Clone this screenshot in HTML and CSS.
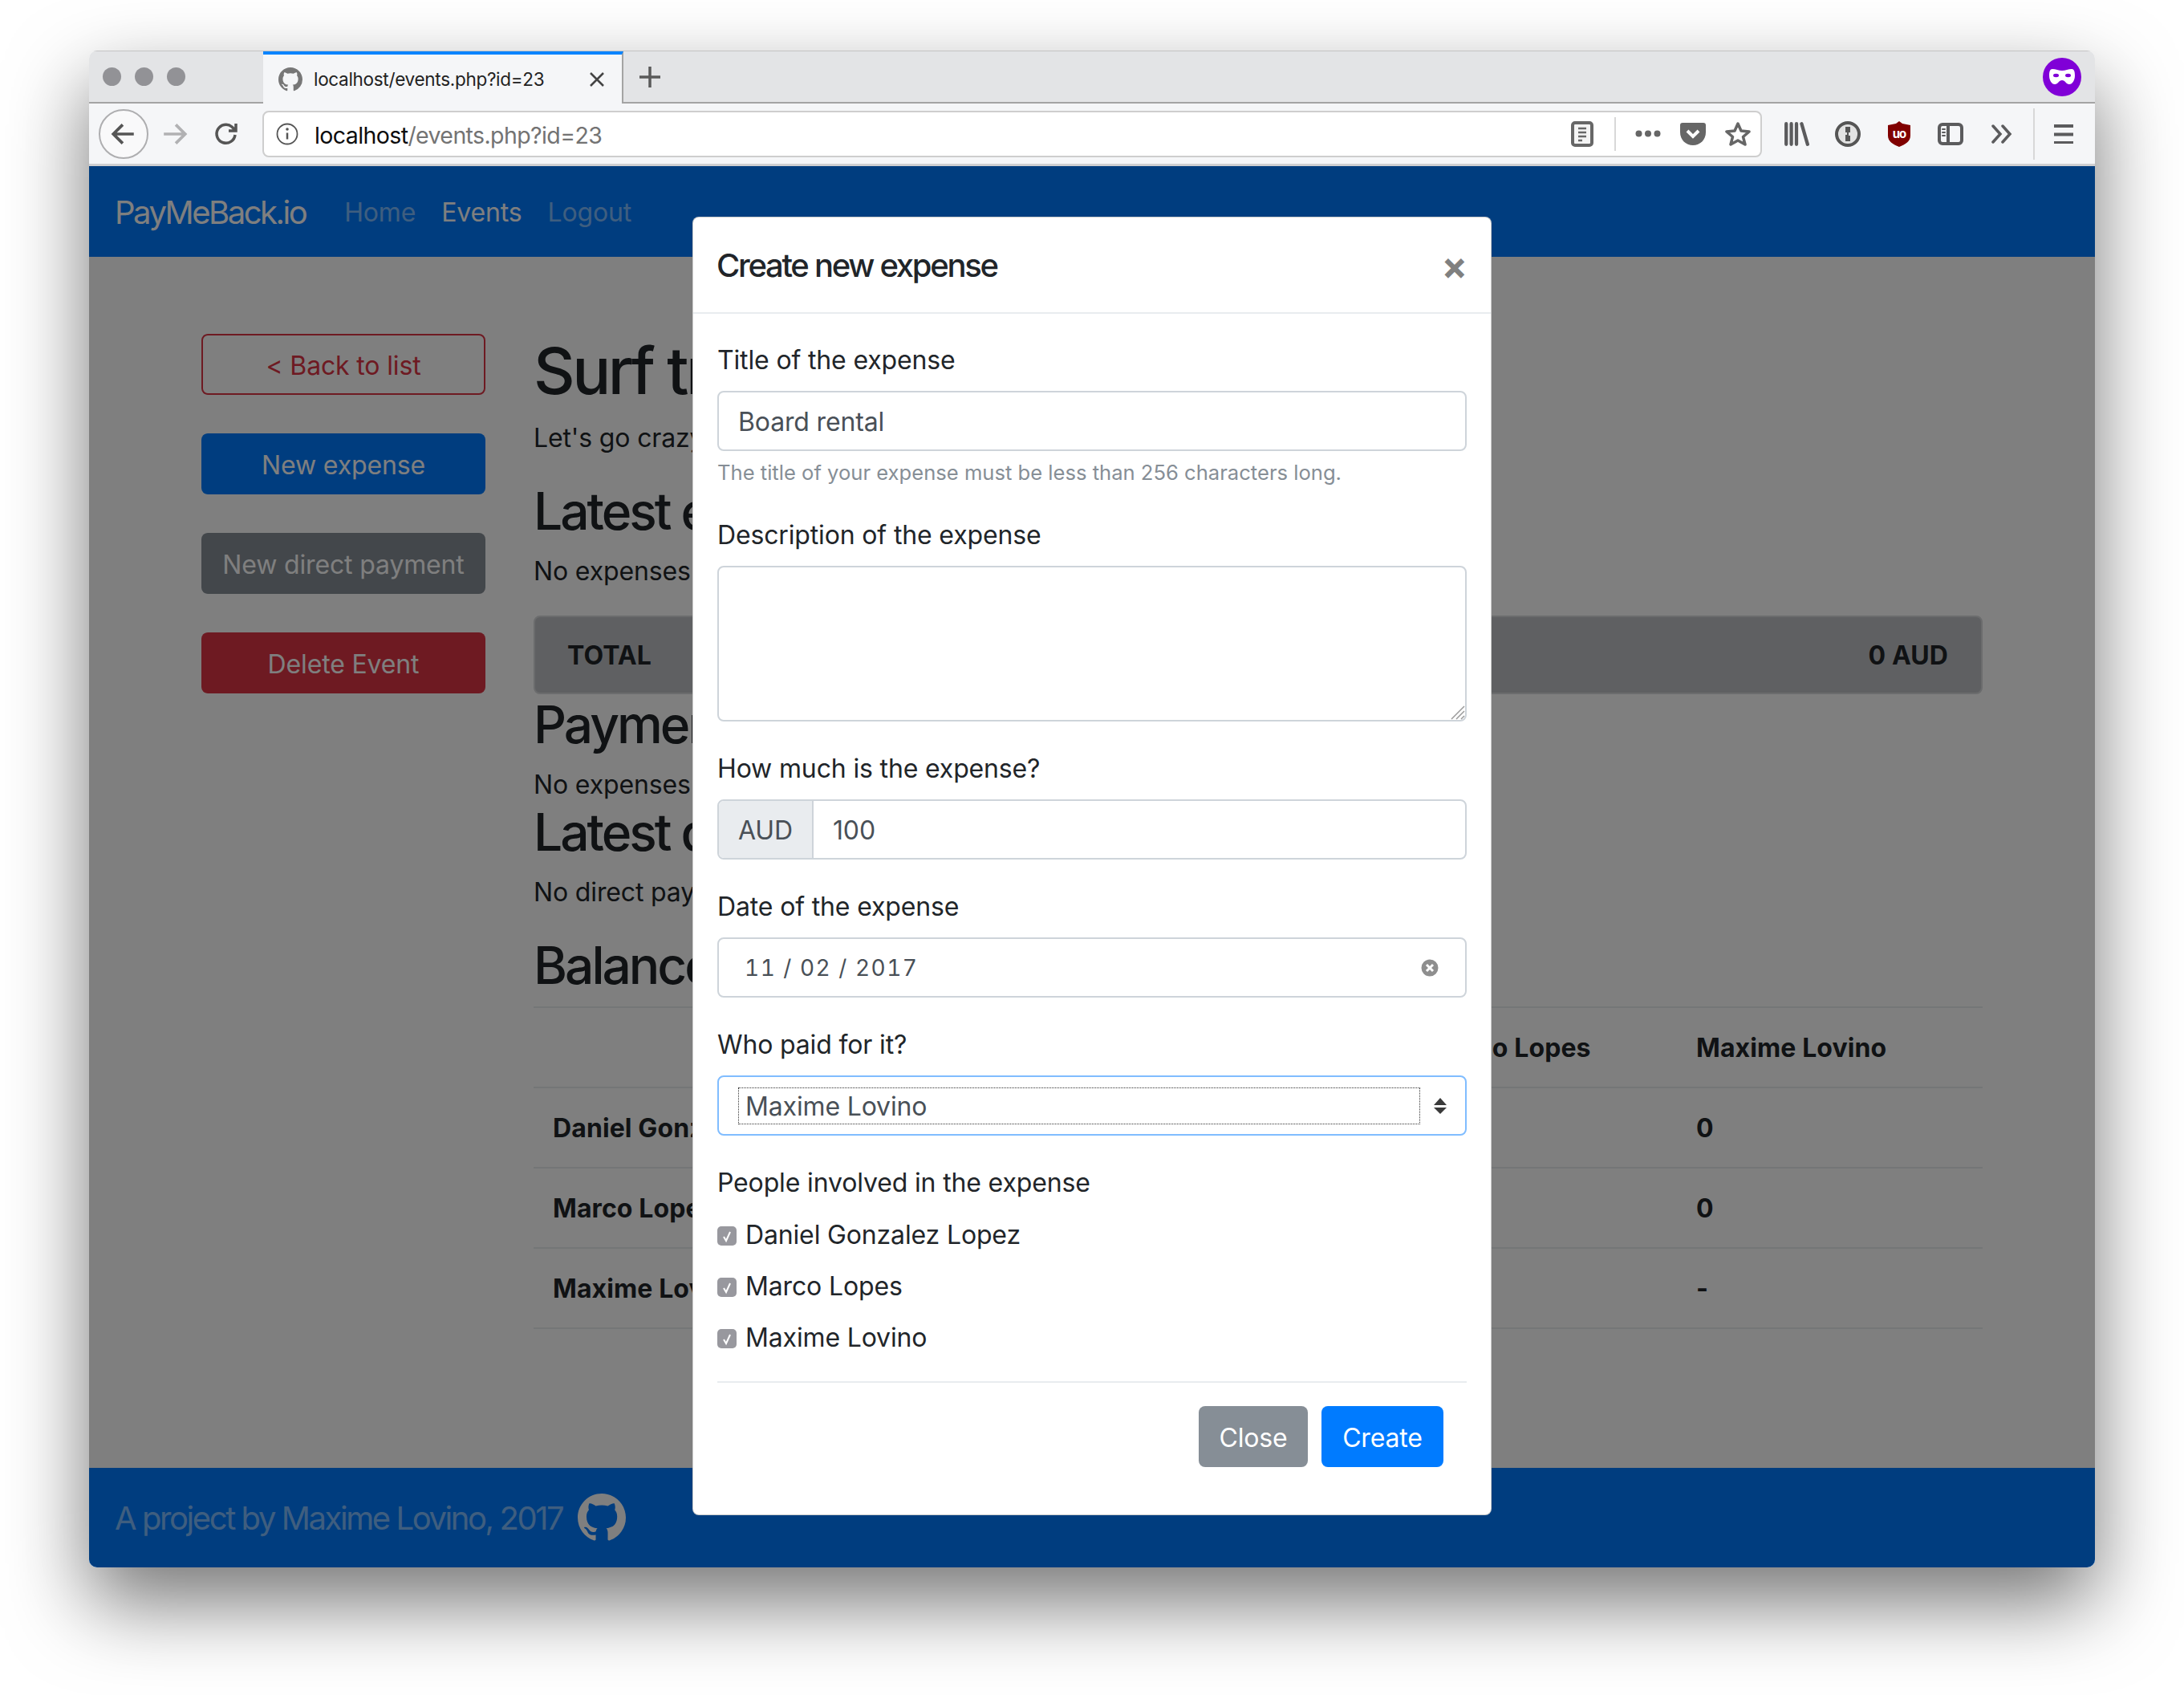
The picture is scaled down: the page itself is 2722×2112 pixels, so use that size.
FILE: index.html
```html
<!DOCTYPE html>
<html lang="en">
<head>
    <meta charset="UTF-8">
    <title>PayMeBack.io</title>
    <link rel="stylesheet" href="styles.css">
</head>
<body>
    <div class="window">
        <div class="tabbar">
            <div class="lights"><span></span><span></span><span></span></div>
            <div class="tab">
                <svg class="favicon" viewBox="0 0 16 16"><path d="M8 0C3.58 0 0 3.58 0 8c0 3.54 2.29 6.53 5.47 7.59.4.07.55-.17.55-.38 0-.19-.01-.82-.01-1.49-2.01.37-2.53-.49-2.69-.94-.09-.23-.48-.94-.82-1.13-.28-.15-.68-.52-.01-.53.63-.01 1.08.58 1.23.82.72 1.21 1.87.87 2.33.66.07-.52.28-.87.51-1.07-1.78-.2-3.64-.89-3.64-3.95 0-.87.31-1.59.82-2.15-.08-.2-.36-1.02.08-2.12 0 0 .67-.21 2.2.82.64-.18 1.32-.27 2-.27.68 0 1.36.09 2 .27 1.53-1.04 2.2-.82 2.2-.82.44 1.1.16 1.92.08 2.12.51.56.82 1.27.82 2.15 0 3.07-1.87 3.75-3.65 3.95.29.25.54.73.54 1.48 0 1.07-.01 1.93-.01 2.2 0 .21.15.46.55.38A8.013 8.013 0 0016 8c0-4.42-3.58-8-8-8z"/></svg>
                <span class="tab-title">localhost/events.php?id=23</span>
                <svg class="tab-close" viewBox="0 0 20 20"><path d="M2 2l16 16M18 2L2 18"/></svg>
            </div>
            <svg class="newtab" viewBox="0 0 28 28"><path d="M14 1v26M1 14h26"/></svg>
            <svg class="mask" viewBox="0 0 48 48"><circle cx="24" cy="24" r="24"/><path class="mask-shape" d="M12 14c4 0 8 2 12 2s8-2 12-2c3 0 4 3 4 8 0 6-3 11-7 11-4 0-5-5-9-5s-5 5-9 5c-4 0-7-5-7-11 0-5 1-8 4-8z"/><ellipse class="mask-eye" cx="16.500" cy="22" rx="3.500" ry="2.200"/><ellipse class="mask-eye" cx="31.500" cy="22" rx="3.500" ry="2.200"/></svg>
        </div>

        <div class="toolbar">
            <div class="back">
                <svg class="ico" viewBox="0 0 32 32"><path d="M28 16H5M15 5L4 16l11 11"/></svg>
            </div>
            <svg class="ico forward" viewBox="0 0 32 32"><path d="M3 16h24M17 5l11 11-11 11"/></svg>
            <svg class="ico reload" viewBox="0 0 32 32"><path d="M27 17a11.500 11.500 0 1 1-4-10l4.500 4.500M28 3v9h-9"/></svg>
            <div class="urlbar">
                <svg class="ico info" viewBox="0 0 28 28"><circle cx="14" cy="14" r="12.500"/><path class="thin" d="M14 12.500v8"/><circle class="dot" cx="14" cy="8" r="1.800"/></svg>
                <div class="url"><span class="url-host">localhost</span>/events.php?id=23</div>
                <svg class="reader" viewBox="0 0 28 32"><rect x="2" y="2" width="24" height="28" rx="3"/><path d="M9 9h10M9 14h10M9 19h10M9 24h5"/></svg>
                <span class="url-sep"></span>
                <svg class="slot dots" viewBox="0 0 32 9"><circle cx="4.500" cy="4.500" r="4"/><circle cx="16" cy="4.500" r="4"/><circle cx="27.500" cy="4.500" r="4"/></svg>
                <svg class="slot pocket" viewBox="0 0 32 28"><path d="M3 0h26a3 3 0 0 1 3 3v9c0 9-7 16-16 16S0 21 0 12V3a3 3 0 0 1 3-3z"/><path class="pocket-v" d="M9 10l7 7 7-7"/></svg>
                <svg class="slot star" viewBox="0 0 32 32"><path d="M16 3l4 9 10 1-7.500 6.500L25 29l-9-5-9 5 2.500-9.500L2 13l10-1z"/></svg>
            </div>
            <div class="tools">
                <svg class="tool" viewBox="0 0 30 28"><path d="M3 2v24M9 2v24M15 2v24M21 2l7 24"/></svg>
                <svg class="tool onepass" viewBox="0 0 32 32"><circle class="op-ring" cx="16" cy="16" r="14"/><path class="op-key" d="M13 7h6v7h-2v4h2v7h-6v-8h2v-3h-2z"/></svg>
                <svg class="tool ublock" viewBox="0 0 28 32"><path d="M14 0l4 3 10 2v13c0 7-6 11-14 14C6 29 0 25 0 18V5l10-2z"/><text x="14" y="21" text-anchor="middle">uo</text></svg>
                <svg class="tool" viewBox="0 0 32 28"><rect x="2" y="2" width="28" height="24" rx="4"/><path d="M13 2v24"/><path class="thin" d="M6 8h3M6 12h3M6 16h3"/></svg>
                <svg class="tool chevrons" viewBox="0 0 26 24"><path d="M2 2l9 10-9 10M14 2l9 10-9 10"/></svg>
            </div>
            <span class="tool-sep"></span>
            <svg class="tool menu" viewBox="0 0 24 24"><path d="M0 2h24M0 12.500h24M0 23h24"/></svg>
        </div>

        <div class="viewport">
            <nav class="navbar">
                <a class="brand">PayMeBack.io</a>
                <a class="nav-link">Home</a>
                <a class="nav-link active">Events</a>
                <a class="nav-link">Logout</a>
            </nav>

            <div class="content">
                <aside class="sidebar">
                    <a class="btn btn-outline-danger">&lt; Back to list</a>
                    <a class="btn btn-primary">New expense</a>
                    <a class="btn btn-secondary">New direct payment</a>
                    <a class="btn btn-danger">Delete Event</a>
                </aside>
                <main class="main">
                    <h1>Surf trip</h1>
                    <p class="mb">Let's go crazy on the waves</p>
                    <h2>Latest expenses</h2>
                    <p class="mb">No expenses yet</p>
                    <div class="total"><span>TOTAL</span><span>0 AUD</span></div>
                    <h2>Payments</h2>
                    <p>No expenses yet</p>
                    <h2>Latest direct payments</h2>
                    <p class="mb">No direct payments yet</p>
                    <h2>Balance</h2>
                    <table class="balance">
                        <thead>
                            <tr><th class="col-name"></th><th class="col-a">Daniel Gonzalez Lopez</th><th class="col-b">Marco Lopes</th><th class="col-c">Maxime Lovino</th></tr>
                        </thead>
                        <tbody>
                            <tr><th>Daniel Gonzalez Lopez</th><td>-</td><td>0</td><td>0</td></tr>
                            <tr><th>Marco Lopes</th><td>0</td><td>-</td><td>0</td></tr>
                            <tr><th>Maxime Lovino</th><td>0</td><td>0</td><td>-</td></tr>
                        </tbody>
                    </table>
                </main>
            </div>

            <footer class="footer">
                <span class="footer-text">A project by Maxime Lovino, 2017</span>
                <svg class="gh" viewBox="0 0 16 16"><path d="M8 0C3.58 0 0 3.58 0 8c0 3.54 2.29 6.53 5.47 7.59.4.07.55-.17.55-.38 0-.19-.01-.82-.01-1.49-2.01.37-2.53-.49-2.69-.94-.09-.23-.48-.94-.82-1.13-.28-.15-.68-.52-.01-.53.63-.01 1.08.58 1.23.82.72 1.21 1.87.87 2.33.66.07-.52.28-.87.51-1.07-1.78-.2-3.64-.89-3.64-3.95 0-.87.31-1.59.82-2.15-.08-.2-.36-1.02.08-2.12 0 0 .67-.21 2.2.82.64-.18 1.32-.27 2-.27.68 0 1.36.09 2 .27 1.53-1.04 2.2-.82 2.2-.82.44 1.1.16 1.92.08 2.12.51.56.82 1.27.82 2.15 0 3.07-1.87 3.75-3.65 3.95.29.25.54.73.54 1.48 0 1.07-.01 1.93-.01 2.2 0 .21.15.46.55.38A8.013 8.013 0 0016 8c0-4.42-3.58-8-8-8z"/></svg>
            </footer>

            <div class="backdrop"></div>

            <div class="modal">
                <div class="modal-header">
                    <h5>Create new expense</h5>
                    <span class="close">×</span>
                </div>
                <form class="modal-body">
                    <div class="group">
                        <label>Title of the expense</label>
                        <div class="control">Board rental</div>
                        <small>The title of your expense must be less than 256 characters long.</small>
                    </div>
                    <div class="group">
                        <label>Description of the expense</label>
                        <div class="area">
                            <svg class="resizer" viewBox="0 0 20 20"><path d="M19 3L3 19M19 9L9 19M19 15l-4 4"/></svg>
                        </div>
                    </div>
                    <div class="group">
                        <label>How much is the expense?</label>
                        <div class="control amount"><span class="addon">AUD</span><span class="amount-val">100</span></div>
                    </div>
                    <div class="group">
                        <label>Date of the expense</label>
                        <div class="control date">
                            <span class="date-val">11 / 02 / 2017</span>
                            <svg class="clear" viewBox="0 0 24 24"><circle cx="12" cy="12" r="12"/><path d="M8 8l8 8M16 8l-8 8"/></svg>
                        </div>
                    </div>
                    <div class="group">
                        <label>Who paid for it?</label>
                        <div class="control select">
                            <span class="select-val">Maxime Lovino</span>
                            <svg class="updown" viewBox="0 0 16 20"><path d="M8 0l8 9H0zM0 12h16l-8 8z"/></svg>
                        </div>
                    </div>
                    <div class="group people">
                        <label>People involved in the expense</label>
                        <div class="check"><svg class="box" viewBox="0 0 24 24"><rect width="24" height="24" rx="5"/><path d="M8 13l3 5 5-11"/></svg>Daniel Gonzalez Lopez</div>
                        <div class="check"><svg class="box" viewBox="0 0 24 24"><rect width="24" height="24" rx="5"/><path d="M8 13l3 5 5-11"/></svg>Marco Lopes</div>
                        <div class="check"><svg class="box" viewBox="0 0 24 24"><rect width="24" height="24" rx="5"/><path d="M8 13l3 5 5-11"/></svg>Maxime Lovino</div>
                    </div>
                    <div class="modal-footer">
                        <a class="btn btn-close">Close</a>
                        <a class="btn btn-create">Create</a>
                    </div>
                </form>
            </div>
        </div>
    </div>
</body>
</html>
```

FILE: styles.css
```css
* {
    box-sizing: border-box;
}

body {
    margin: 0;
    padding: 63px 111px 0;
    height: 2112px;
    overflow: hidden;
    background: #fff;
    color: #212529;
    font-family: Inter, "Liberation Sans", sans-serif;
    font-size: 32px;
    line-height: 48px;
    letter-spacing: -0.15px;
}

.window {
    width: 2500px;
    height: 1890px;
    display: flex;
    flex-direction: column;
    border-radius: 10px;
    overflow: hidden;
    box-shadow: 0 44px 100px rgba(0, 0, 0, .54);
}

/* browser chrome */
.tabbar {
    height: 66px;
    display: flex;
    align-items: center;
    background: #e3e4e6;
    border-top: 1px solid #c4c4c4;
    border-bottom: 2px solid #a4a4a4;
}

.lights {
    display: flex;
    gap: 17px;
    margin-left: 17px;
}

.lights span {
    width: 23px;
    height: 23px;
    border-radius: 50%;
    background: #929296;
}

.tab {
    width: 449px;
    height: 65px;
    margin-left: 97px;
    margin-bottom: -2px;
    padding: 0 21px 0 19px;
    display: flex;
    align-items: center;
    background: #f5f6f8;
    border-top: 4px solid #0a84ff;
    border-right: 2px solid #a4a4a4;
}

.favicon {
    width: 30px;
    height: 30px;
    fill: #777;
}

.tab-title {
    margin-left: 14px;
    font-size: 22.500px;
    letter-spacing: -0.3px;
    color: #222;
}

.tab-close {
    width: 20px;
    height: 20px;
    margin-left: auto;
    fill: none;
    stroke: #444;
    stroke-width: 2.500;
}

.newtab {
    width: 28px;
    height: 28px;
    margin-left: 19px;
    fill: none;
    stroke: #5a5a5a;
    stroke-width: 3.500;
}

.mask {
    width: 48px;
    height: 48px;
    margin-left: auto;
    margin-right: 17px;
    fill: #8000d7;
}

.mask .mask-shape {
    fill: #fff;
}

.toolbar {
    height: 78px;
    display: flex;
    align-items: center;
    background: #f5f6f8;
    border-bottom: 3px solid #cfcfd1;
}

.ico {
    fill: none;
    stroke: #555;
    stroke-width: 3.500;
}

.back {
    width: 62px;
    height: 62px;
    margin-left: 12px;
    display: flex;
    align-items: center;
    justify-content: center;
    border: 2px solid #aeaeb0;
    border-radius: 50%;
    background: #f9f9fa;
}

.back .ico {
    width: 34px;
    height: 34px;
}

.forward {
    width: 34px;
    height: 34px;
    margin-left: 16px;
    stroke: #b1b1b3;
}

.reload {
    width: 32px;
    height: 32px;
    margin-left: 31px;
}

.urlbar {
    width: 1869px;
    height: 58px;
    margin-left: 29px;
    display: flex;
    align-items: center;
    background: #fff;
    border: 2px solid #cecece;
    border-radius: 8px;
}

.info {
    width: 28px;
    height: 28px;
    margin-left: 15px;
    stroke-width: 1.800;
}

.info .thin {
    stroke-width: 2.500;
}

.info .dot {
    fill: #555;
    stroke: none;
}

.url {
    margin-left: 20px;
    padding-top: 5px;
    font-size: 28.500px;
    letter-spacing: -0.6px;
    color: #737373;
}

.url-host {
    color: #0c0c0d;
}

.reader {
    width: 28px;
    height: 32px;
    margin-left: auto;
    fill: #f4f4f4;
    stroke: #676767;
    stroke-width: 2.500;
}

.reader rect {
    stroke-width: 4;
}

.url-sep {
    width: 2px;
    height: 42px;
    margin-left: 26px;
    margin-right: 12px;
    background: #d8d8d8;
}

.slot {
    width: 32px;
    margin: 0 12px;
}

.dots {
    height: 9px;
    fill: #666;
}

.pocket {
    height: 28px;
    fill: #666;
}

.pocket .pocket-v {
    fill: none;
    stroke: #fff;
    stroke-width: 4;
}

.star {
    height: 32px;
    fill: none;
    stroke: #666;
    stroke-width: 3.500;
    stroke-linejoin: round;
}

.tools {
    display: flex;
    align-items: center;
    gap: 32px;
    margin-left: 27px;
}

.tool {
    width: 32px;
    height: 32px;
    fill: none;
    stroke: #5b5b5d;
    stroke-width: 4;
    stroke-linecap: round;
}

.tool .thin {
    stroke-width: 2;
}

.op-ring {
    fill: #e2e2e2;
    stroke: #555;
}

.onepass .op-key {
    fill: #555;
    stroke: none;
}

.ublock {
    fill: #800000;
    stroke: none;
}

.ublock text {
    fill: #fff;
    font-size: 15px;
    font-weight: 700;
    letter-spacing: -1px;
}

.chevrons {
    width: 26px;
    height: 24px;
    margin-left: 3px;
    stroke-width: 3.500;
}

.tool-sep {
    width: 2px;
    height: 64px;
    margin-left: 26px;
    background: #d8d8d8;
}

.menu {
    width: 24px;
    height: 24px;
    margin-left: 24px;
}

/* the page inside the browser */
.viewport {
    position: relative;
    flex: 1;
    display: flex;
    flex-direction: column;
    background: #fff;
}

.navbar {
    height: 113px;
    padding: 2px 32px 0 32px;
    display: flex;
    align-items: center;
    gap: 32px;
    background: #007bff;
    color: rgba(255, 255, 255, .5);
}

.brand {
    margin-right: 16px;
    font-size: 40px;
    letter-spacing: -2.500px;
    color: #fff;
}

.nav-link.active {
    color: #fff;
}

.content {
    flex: 1;
    padding: 96px 140px 0;
    display: grid;
    grid-template-columns: 354px 1fr;
    gap: 60px;
    align-items: start;
}

.sidebar {
    display: flex;
    flex-direction: column;
    gap: 48px;
}

.btn {
    display: block;
    height: 76px;
    line-height: 75px;
    border: 2px solid transparent;
    border-radius: 8px;
    text-align: center;
    color: #fff;
}

.btn-outline-danger {
    border-color: #dc3545;
    color: #dc3545;
}

.btn-primary {
    background: #007bff;
}

.btn-secondary {
    background: #868e96;
}

.btn-danger {
    background: #dc3545;
}

.main {
    padding-top: 2px;
}

h1,
h2,
h5 {
    margin: 0 0 16px;
    font-weight: 500;
}

h1 {
    font-size: 80px;
    line-height: 88px;
    letter-spacing: -3.500px;
}

h2 {
    font-size: 64px;
    line-height: 70px;
    letter-spacing: -3px;
}

p {
    margin: 0;
}

p.mb {
    margin-bottom: 32px;
}

.total {
    height: 98px;
    margin: -1px 0 3px;
    padding: 2px 41px 0 40px;
    display: flex;
    align-items: center;
    justify-content: space-between;
    background: #bfc1c4;
    border: 2px solid #d6d8db;
    border-radius: 8px;
    font-weight: 700;
    letter-spacing: 0.1px;
}

.balance {
    width: 100%;
    table-layout: fixed;
    border-collapse: collapse;
}

.balance th,
.balance td {
    height: 100px;
    padding: 2px 24px 0;
    border-top: 2px solid #e9ecef;
    border-bottom: 2px solid #e9ecef;
    text-align: left;
    font-weight: 700;
    letter-spacing: 0.1px;
}

.col-name {
    width: 561px;
}

.col-a {
    width: 530px;
}

.col-b {
    width: 334px;
}

.footer {
    height: 124px;
    padding-left: 32px;
    display: flex;
    align-items: center;
    gap: 19px;
    background: #007bff;
    font-size: 40px;
    letter-spacing: -2.430px;
    color: rgba(255, 255, 255, .5);
}

.footer-text {
    padding-top: 2px;
}

.gh {
    width: 60px;
    height: 60px;
    fill: #fff;
}

.backdrop {
    position: absolute;
    inset: 0;
    background: rgba(0, 0, 0, .5);
}

/* modal */
.modal {
    position: absolute;
    top: 63px;
    left: 752px;
    width: 996px;
    height: 1618px;
    background: #fff;
    border: 1px solid rgba(0, 0, 0, .2);
    border-radius: 8px;
}

.modal-header {
    height: 120px;
    padding: 2px 29px 0 29px;
    display: flex;
    align-items: center;
    justify-content: space-between;
    border-bottom: 2px solid #e9ecef;
}

.modal-header h5 {
    margin: 0;
    font-size: 40px;
    letter-spacing: -2.300px;
}

.close {
    font-size: 48px;
    font-weight: 700;
    color: #808080;
}

.modal-body {
    padding: 32px 30px;
}

.group {
    margin-bottom: 33px;
}

label {
    display: block;
    margin-bottom: 14px;
    padding-top: 2px;
}

.control {
    height: 75px;
    padding: 2px 24px 0;
    display: flex;
    align-items: center;
    border: 2px solid #ced4da;
    border-radius: 8px;
    color: #495057;
}

small {
    display: block;
    margin-top: 8px;
    font-size: 25.600px;
    line-height: 38px;
    letter-spacing: 0;
    color: #868e96;
}

.area {
    position: relative;
    height: 194px;
    border: 2px solid #ced4da;
    border-radius: 8px;
    background: #fff;
}

.resizer {
    position: absolute;
    right: 0;
    bottom: 0;
    width: 20px;
    height: 20px;
    fill: none;
    stroke: #9a9a9a;
    stroke-width: 1.500;
}

.amount {
    padding: 0;
}

.addon {
    width: 118px;
    height: 100%;
    padding: 2px 0 0 24px;
    display: flex;
    align-items: center;
    background: #e9ecef;
    border-right: 2px solid #ced4da;
    border-radius: 6px 0 0 6px;
}

.amount-val {
    margin-left: 24px;
    padding-top: 2px;
}

.date {
    padding-top: 0;
}

.date-val {
    padding-left: 8px;
    font-size: 28px;
    font-variant-numeric: tabular-nums;
    letter-spacing: 1.500px;
}

.clear {
    width: 24px;
    height: 24px;
    margin-left: auto;
    margin-right: 8px;
    fill: #8e8e8e;
    stroke: #fff;
    stroke-width: 3;
}

.select {
    padding: 0 0 0 24px;
    border-color: #80bdff;
}

.select-val {
    width: 850px;
    height: 46px;
    padding: 2px 0 0 8px;
    display: flex;
    align-items: center;
    border: 1px dotted #333;
}

.updown {
    width: 16px;
    height: 20px;
    margin-left: 17px;
    fill: #3a3a3a;
}

.people {
    margin-bottom: 0;
}

.people label {
    margin-bottom: 8px;
}

.check {
    height: 64px;
    padding-top: 2px;
    display: flex;
    align-items: center;
    gap: 11px;
    color: #212529;
}

.box {
    width: 24px;
    height: 24px;
    margin-top: 2px;
    fill: #98989e;
    stroke: #fff;
    stroke-width: 2;
}

.box rect {
    stroke: none;
}

.modal-footer {
    margin-top: 23px;
    padding: 29px 29px 0 0;
    display: flex;
    justify-content: flex-end;
    gap: 17px;
    border-top: 2px solid #e9ecef;
}

.btn-close {
    width: 136px;
    background: #868e96;
}

.btn-create {
    width: 152px;
    background: #007bff;
}
```
